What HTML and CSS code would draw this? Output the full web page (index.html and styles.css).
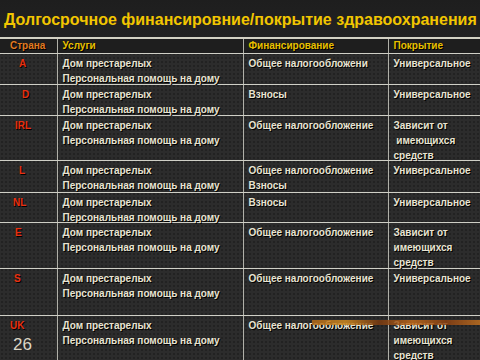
FILE: index.html
```html
<!DOCTYPE html>
<html lang="ru">
<head>
<meta charset="utf-8">
<link rel="stylesheet" href="styles.css">
</head>
<body>
<div class="slide">
  <div class="strip strip-top"></div>
  <h1 class="title">Долгосрочное финансировние/покрытие здравоохранения</h1>
  <table class="grid">
    <colgroup><col class="c1"><col class="c2"><col class="c3"><col class="c4"></colgroup>
    <tr class="head">
      <th class="country-h">Страна</th>
      <th>Услуги</th>
      <th>Финансирование</th>
      <th>Покрытие</th>
    </tr>
    <tr class="r31">
      <td class="cc p19"><div class="t">A</div></td>
      <td><div class="t">Дом престарелых<br>Персональная помощь на дому</div></td>
      <td><div class="t">Общее налогообложени</div></td>
      <td><div class="t">Универсальное</div></td>
    </tr>
    <tr class="r31">
      <td class="cc p22"><div class="t">D</div></td>
      <td><div class="t">Дом престарелых<br>Персональная помощь на дому</div></td>
      <td><div class="t">Взносы</div></td>
      <td><div class="t">Универсальное</div></td>
    </tr>
    <tr class="r45">
      <td class="cc p15"><div class="t">IRL</div></td>
      <td><div class="t">Дом престарелых<br>Персональная помощь на дому</div></td>
      <td><div class="t">Общее налогообложение</div></td>
      <td><div class="t">Зависит от<br>&nbsp;имеющихся<br>средств</div></td>
    </tr>
    <tr class="r32">
      <td class="cc p19"><div class="t">L</div></td>
      <td><div class="t">Дом престарелых<br>Персональная помощь на дому</div></td>
      <td><div class="t">Общее налогообложение<br>Взносы</div></td>
      <td><div class="t">Универсальное</div></td>
    </tr>
    <tr class="r30">
      <td class="cc p13"><div class="t">NL</div></td>
      <td><div class="t">Дом престарелых<br>Персональная помощь на дому</div></td>
      <td><div class="t">Взносы</div></td>
      <td><div class="t">Универсальное</div></td>
    </tr>
    <tr class="r46">
      <td class="cc p15"><div class="t">E</div></td>
      <td><div class="t">Дом престарелых<br>Персональная помощь на дому</div></td>
      <td><div class="t">Общее налогообложение</div></td>
      <td><div class="t">Зависит от<br>имеющихся<br>средств</div></td>
    </tr>
    <tr class="r47">
      <td class="cc p14"><div class="t">S</div></td>
      <td><div class="t">Дом престарелых<br>Персональная помощь на дому</div></td>
      <td><div class="t">Общее налогообложение</div></td>
      <td><div class="t">Универсальное</div></td>
    </tr>
    <tr class="last">
      <td class="cc p10"><div class="t">UK</div></td>
      <td><div class="t">Дом престарелых<br>Персональная помощь на дому</div></td>
      <td><div class="t">Общее налогообложение</div></td>
      <td><div class="t">Зависит от<br>имеющихся<br>средств</div></td>
    </tr>
  </table>
  <div class="strip strip-bottom"></div>
  <div class="page-num">26</div>
</div>
</body>
</html>
```
FILE: styles.css
```css
html, body {
  margin: 0;
  padding: 0;
  background: #2b2b2b;
}
.slide {
  position: relative;
  width: 480px;
  height: 360px;
  overflow: hidden;
  background-color: #2c2c2c;
  background-image:
    radial-gradient(circle, rgba(0,0,0,0.35) 0.6px, transparent 0.9px);
  background-size: 4px 4px;
  font-family: "Liberation Sans", Arial, sans-serif;
}
.strip {
  position: absolute;
  opacity: 0.85;
}
.strip-top {
  left: 0;
  top: 8px;
  width: 236px;
  height: 4px;
  background: linear-gradient(90deg, #7a3a12, #c06818 15%, #8a4014 35%, #b86a20 55%, #7a3a10 75%, rgba(90,50,20,0));
}
.strip-bottom {
  left: 312px;
  top: 320px;
  width: 168px;
  height: 5px;
  background: linear-gradient(90deg, #b06818, #d08a20 20%, #7a3a10 40%, #c06a1a 60%, #8a4012 80%, #c07020);
}
.title {
  margin: 0;
  padding: 11px 0 0 4px;
  height: 26px;
  font-size: 16px;
  font-weight: bold;
  color: #f2c600;
  white-space: nowrap;
  position: relative;
  background: linear-gradient(#1e1e1e, #222);
}
.grid {
  width: 480px;
  table-layout: fixed;
  border-collapse: collapse;
  border-top: 2px solid #d4d2c4;
  font-size: 10px;
  font-weight: bold;
  color: #e8e4d2;
  text-shadow: 1px 1px 0 #000;
}
.c1 { width: 57px; }
.c2 { width: 186px; }
.c3 { width: 145px; }
.c4 { width: 92px; }
.grid th, .grid td {
  text-align: left;
  vertical-align: top;
  padding: 0 0 0 5px;
  line-height: 15px;
  border-left: 1px solid #b0b0a8;
  border-bottom: 1px solid #cfcfc6;
  white-space: nowrap;
  overflow: hidden;
}
.grid td { padding-top: 2px; overflow: visible; }
.t { margin-bottom: -3px; }
.grid th:first-child, .grid td:first-child { border-left: none; }
.head th {
  height: 14px;
  line-height: 14px;
  color: #e8c000;
  background: #1e1e1e;
  font-weight: bold;
}
.head th.country-h {
  color: #e07a20;
  padding-left: 10px;
}
.cc { color: #e83010; }
.p10 { padding-left: 10px !important; }
.p13 { padding-left: 13px !important; }
.p14 { padding-left: 14px !important; }
.p15 { padding-left: 15px !important; }
.p19 { padding-left: 19px !important; }
.p22 { padding-left: 22px !important; }
.r30 td { height: 27px; }
.r31 td { height: 28px; }
.r32 td { height: 29px; }
.r45 td { height: 42px; }
.r46 td { height: 43px; }
.r47 td { height: 44px; }
.last td { border-bottom: none; height: 48px; }
.page-num {
  position: absolute;
  left: 13px;
  top: 335px;
  font-size: 17px;
  color: #dcd6c6;
}
```
